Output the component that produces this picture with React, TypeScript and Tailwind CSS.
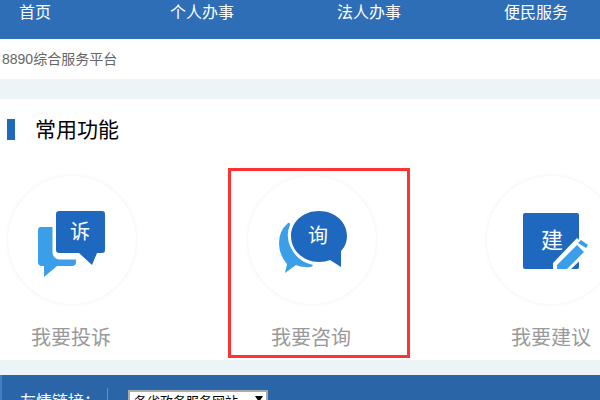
const font = "font-['Liberation_Sans','Noto_Sans_CJK_SC',sans-serif]";

const navItems = ["首页", "个人办事", "法人办事", "便民服务"];

function ComplainIcon() {
  return (
    <svg viewBox="8 176 128 128" className="absolute inset-0 w-full h-full">
      <path d="M41 227H76V262Q76 266 72 266H57L44 277V266H42Q38 266 38 262V230Q38 227 41 227Z" fill="#3a9fe8" />
      <rect x="52.5" y="207.5" width="56" height="52" rx="7" fill="#fff" />
      <path d="M59 211H102Q105 211 105 214V250Q105 253 102 253H97L92 265L79 253H59Q56 253 56 250V214Q56 211 59 211Z" fill="#1e69bf" />
      <text x="80" y="239" textAnchor="middle" fontSize="20" fill="#fff" fontFamily="'Liberation Sans','Noto Sans CJK SC',sans-serif">诉</text>
    </svg>
  );
}

function ConsultIcon() {
  return (
    <svg viewBox="248 176 128 128" className="absolute inset-0 w-full h-full">
      <path d="M287 224Q290 221 290 225Q285 236 291 248Q298 262 313 265Q312 268 305 267Q300 267 296 265L285 273L287 264Q279 255 279 243Q279 231 287 224Z" fill="#3a9fe8" />
      <path d="M319 211C335 211 347 222 347 236C347 242 345 247 341 251L341 267L330 260C327 261 323 262 319 262C303 262 291 250 291 236C291 222 303 211 319 211Z" fill="#1e69bf" />
      <text x="318" y="243" textAnchor="middle" fontSize="20" fill="#fff" fontFamily="'Liberation Sans','Noto Sans CJK SC',sans-serif">询</text>
    </svg>
  );
}

function SuggestIcon() {
  return (
    <svg viewBox="487 176 128 128" className="absolute inset-0 w-full h-full">
      <rect x="523" y="213" width="56" height="56" rx="2" fill="#1e69bf" />
      <path d="M553 269V263L577 238L591 250L571 269Z" fill="#fff" />
      <path d="M557 269V265L577 245L584 252L567 269Z" fill="#3a9fe8" />
      <path d="M581 240L588 245L586 248L578 243Z" fill="#3a9fe8" />
      <text x="552" y="248" textAnchor="middle" fontSize="22" fill="#fff" fontFamily="'Liberation Sans','Noto Sans CJK SC',sans-serif">建</text>
    </svg>
  );
}

function Feature({ label, className, labelClass, children }: { label: string; className?: string; labelClass?: string; children: React.ReactNode }) {
  return (
    <div className={`flex flex-col items-center w-32 ${className ?? ""}`}>
      <div className="relative w-32 h-32 rounded-full bg-white shadow-[0_0_4px_rgba(0,0,0,0.07)]">{children}</div>
      <div className={`mt-5 text-[20px] leading-[28px] text-[#999] whitespace-nowrap ${labelClass ?? "pr-[2px]"}`}>{label}</div>
    </div>
  );
}

export default function App() {
  return (
    <div className={`relative w-[600px] h-[400px] overflow-hidden bg-white ${font}`}>
      <nav className="flex h-[39px] pl-[3px] gap-[103px] bg-[#2e6eb6] text-white text-base leading-[26px]">
        {navItems.map((item) => (
          <a key={item} className="w-16 shrink-0 text-center">
            {item}
          </a>
        ))}
      </nav>

      <div className="h-10 pl-[2px] text-sm leading-10 text-[#666]">8890综合服务平台</div>
      <div className="h-5 bg-[#edf4f8]" />

      <section className="h-[261px]">
        <div className="flex items-center pt-5 h-[41px]">
          <span className="w-2 h-[21px] ml-[7px] bg-[#1e69bf]" />
          <h2 className="ml-5 text-[21px] leading-7 text-black">常用功能</h2>
        </div>
        <div className="flex pl-2 gap-28 mt-9">
          <Feature label="我要投诉">
            <ComplainIcon />
          </Feature>
          <Feature label="我要咨询">
            <ConsultIcon />
          </Feature>
          <Feature label="我要建议" className="-ml-px" labelClass="pr-0">
            <SuggestIcon />
          </Feature>
        </div>
      </section>

      <div className="h-[15px] bg-[#edf4f8]" />

      <footer className="flex items-start h-[25px] bg-[#2a65a8] border-l-2 border-[#3f7fc6] pl-[18px] pt-[15px] text-white">
        <span className="w-[87px] text-base leading-6 whitespace-nowrap">友情链接：</span>
        <span className="w-px h-5 -mt-[2px] bg-[#5f8fc6]" />
        <div className="relative ml-5 w-[140px]">
          <select className="block w-[140px] h-6 appearance-none bg-white text-black text-[13px] pl-[4px] border-2 border-[#aaa]">
            <option>各省政务服务网站</option>
          </select>
          {/* dropdown arrow */}
          <svg viewBox="0 0 8 6" className="absolute left-[127px] top-[6px] w-2 h-[6px]">
            <path d="M0 0H8L4 6Z" fill="#000" />
          </svg>
        </div>
      </footer>

      {/* red annotation frame */}
      <div className="absolute left-[228px] top-[168px] w-[182px] h-[190px] border-[3px] border-[#f33]" />
    </div>
  );
}
